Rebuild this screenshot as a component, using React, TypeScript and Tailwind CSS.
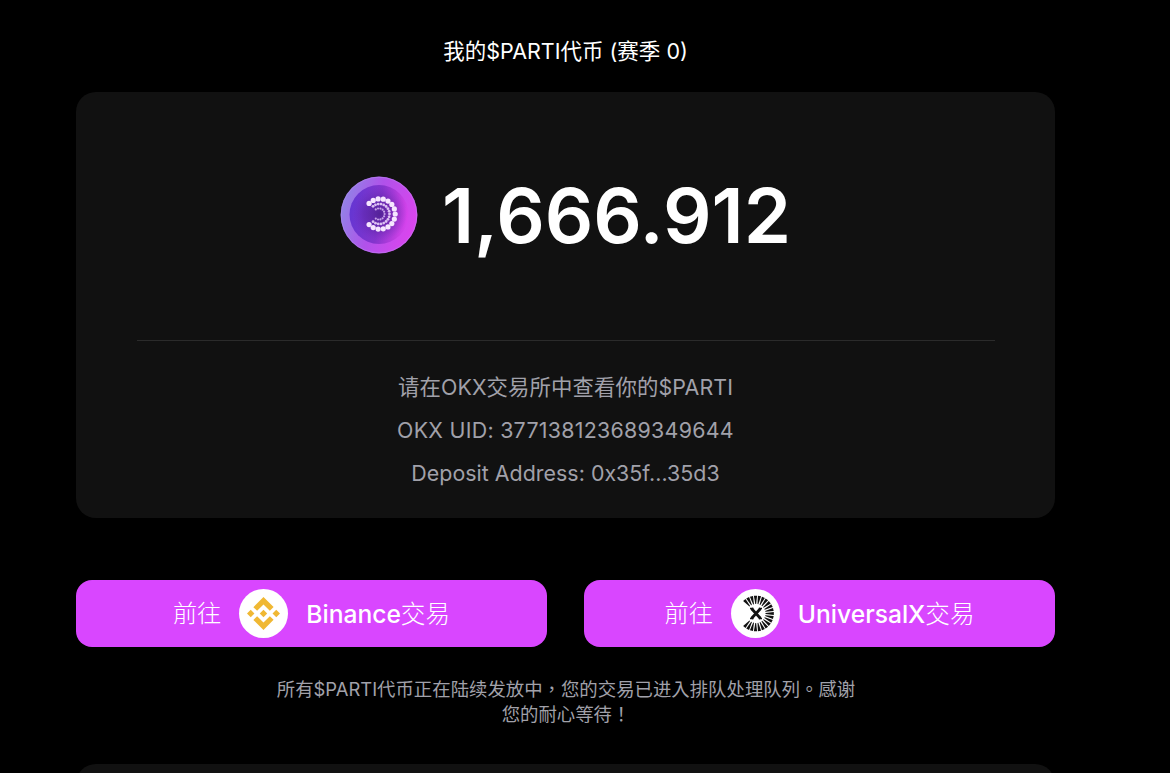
import type { ReactNode } from 'react';
import { SiBinance } from 'react-icons/si';

const details = [
  { text: '请在OKX交易所中查看你的$PARTI', spacing: 'tracking-[0.1px]' },
  { text: 'OKX UID: 377138123689349644', spacing: 'tracking-[0.27px]' },
  { text: 'Deposit Address: 0x35f...35d3', spacing: 'tracking-[0.02px]' },
];

// angles of an arc that is open on the left, in radians
const arc = (count: number, spread: number) =>
  Array.from({ length: count }, (_, i) => (((i / (count - 1)) * 2 - 1) * spread * Math.PI) / 180);

function PartiCoin() {
  return (
    <svg viewBox="0 0 78 78" className="size-[78px] shrink-0">
      <defs>
        <linearGradient id="rim" x1="0" y1="0.3" x2="1" y2="0.6">
          <stop offset="0" stopColor="#8f86e6" />
          <stop offset="0.45" stopColor="#b052ea" />
          <stop offset="1" stopColor="#dd44ee" />
        </linearGradient>
        <linearGradient id="face" x1="0" y1="0.4" x2="1" y2="0.55">
          <stop offset="0" stopColor="#6436d2" />
          <stop offset="0.5" stopColor="#8434cc" />
          <stop offset="0.85" stopColor="#c23fe2" />
          <stop offset="1" stopColor="#d844ee" />
        </linearGradient>
        <radialGradient id="shade">
          <stop offset="0" stopColor="#3d1a80" stopOpacity="0.7" />
          <stop offset="0.6" stopColor="#50209a" stopOpacity="0.4" />
          <stop offset="1" stopColor="#6428b4" stopOpacity="0" />
        </radialGradient>
      </defs>
      <circle cx="39" cy="39" r="38.4" fill="url(#rim)" />
      <circle cx="39" cy="39" r="37.8" fill="none" stroke="#b78af0" strokeWidth="1" opacity="0.5" />
      <circle cx="39" cy="38.5" r="29.5" fill="url(#face)" />
      <circle cx="40" cy="38" r="27" fill="url(#shade)" />
      {arc(15, 136).map((a, i) => (
        <circle key={i} cx={40 + 15.2 * Math.cos(a)} cy={38 + 15.2 * Math.sin(a)} r="2.6" fill="#f6e6ff" />
      ))}
      {arc(17, 130).map((a, i) => (
        <circle key={i} cx={39.5 + 10 * Math.cos(a)} cy={38 + 10 * Math.sin(a)} r="1.4" fill="#dcc0f2" />
      ))}
      {arc(11, 125).map((a, i) => (
        <circle key={i} cx={39 + 5.6 * Math.cos(a)} cy={38 + 5.6 * Math.sin(a)} r="1.1" fill="#c7a2e8" />
      ))}
    </svg>
  );
}

function UniversalXLogo() {
  return (
    <svg viewBox="-25 -24.5 49 49" className="size-[49px]">
      {arc(21, 131).map((a, i) => {
        const deg = (a * 180) / Math.PI;
        return <path key={i} d="M9.5 -0.4L17.8 -1.6V1.6L9.5 0.4Z" fill="#111" transform={`rotate(${deg})`} />;
      })}
      <path d="M-4.6 -5L4.6 5M4.6 -5L-4.6 5" stroke="#111" strokeWidth="2.8" />
      <path d="M-6 -5.2H-2.5M2.8 -5.2H6M-6 5.2H-2.5M2.8 5.2H6" stroke="#111" strokeWidth="1.3" />
    </svg>
  );
}

function TradeButton({ icon, name }: { icon: ReactNode; name: string }) {
  return (
    <button className="flex h-[67px] flex-1 items-center justify-center rounded-2xl bg-[#d946ff] text-white">
      <span className="pt-0.5 text-[24.2px] font-light">前往</span>
      <span className="mx-[18px] flex size-[49px] items-center justify-center rounded-full bg-white">
        {icon}
      </span>
      <span className="pt-0.5 text-[24.6px] font-medium">
        {name}
        <span className="font-light">交易</span>
      </span>
    </button>
  );
}

export default function App() {
  return (
    <div className="h-[773px] overflow-hidden bg-black pl-[76px] font-['Inter','Noto_Sans_CJK_TC',sans-serif]">
      <div className="flex w-[979px] flex-col">
        <h1 className="mt-[35px] h-[33px] text-center text-[21.5px] leading-8 text-white">我的$PARTI代币 (赛季 0)</h1>

        <section className="mt-6 flex h-[426px] flex-col items-center rounded-[20px] bg-[#111]">
          <div className="mt-[84px] flex h-[78px] items-center gap-6">
            <PartiCoin />
            <span className="text-[76px] font-semibold leading-none text-white">1,666.912</span>
          </div>
          <div className="mt-[86px] h-px w-[858px] bg-[#2b2b2b]" />
          <div className="mt-[25px] text-center text-[21.4px] leading-[43px] text-[#a1a1aa]">
            {details.map(d => (
              <p key={d.text} className={d.spacing}>{d.text}</p>
            ))}
          </div>
        </section>

        <div className="mt-[62px] flex gap-[37px]">
          <TradeButton icon={<SiBinance className="size-[33px] text-[#f0b833]" />} name="Binance" />
          <TradeButton icon={<UniversalXLogo />} name="UniversalX" />
        </div>

        <p className="mt-[30px] pl-px text-center text-[18.4px] leading-[25px] text-[#a1a1aa]">
          所有$PARTI代币正在陆续发放中，您的交易已进入排队处理队列。感谢
          <br />
          您的耐心等待！
        </p>

        <div className="mt-[37px] h-10 rounded-t-[20px] bg-[#111]" />
      </div>
    </div>
  );
}
